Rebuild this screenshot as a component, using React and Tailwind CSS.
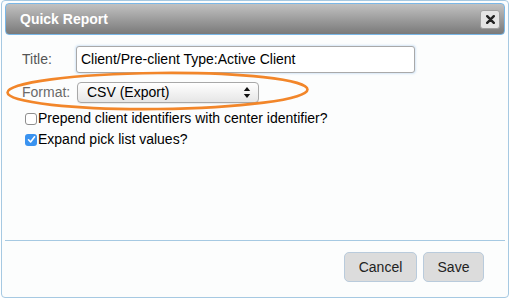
import React from "react";

export default function App() {
  return (
    <div className="relative w-[510px] h-[300px] bg-white" style={{ fontFamily: '"Liberation Sans", Arial, sans-serif' }}>
      <div className="ml-[1px] w-[508px] h-[298px] border border-[#a6c9e2] rounded-[4px] bg-[#fcfdfd] pt-[2px] px-[3px] pb-[3px] flex flex-col">
        {/* Title bar */}
        <div className="h-[32px] shrink-0 rounded-[4px] border border-[#79b7e7] bg-gradient-to-b from-[#c2c2c2] to-[#7a7a7a] flex items-center justify-between pl-[14px] pr-[4px]">
          <span className="text-[14px] font-bold text-white">Quick Report</span>
          <button className="w-[20px] h-[19px] rounded-[3px] border border-[#a0a0a0] bg-[#e4e4e4] flex items-center justify-center">
            <svg width="9" height="9" viewBox="0 0 9 9">
              <path d="M1.2 1.2 L7.8 7.8 M7.8 1.2 L1.2 7.8" stroke="#222" strokeWidth="2.4" strokeLinecap="round" />
            </svg>
          </button>
        </div>

        {/* Content */}
        <div className="h-[205px] shrink-0 pl-[17px] pt-[11px]">
          <div className="flex items-center h-[27px]">
            <span className="w-[54px] text-[14px] text-[#555]">Title:</span>
            <div className="w-[339px] h-[27px] border border-[#a9a9a9] rounded-[3px] bg-white flex items-center pl-[4px] shadow-[0_0_2px_1px_rgba(140,190,235,0.35)]">
              <span className="text-[14px] text-black">Client/Pre-client Type:Active Client</span>
            </div>
          </div>
          <div className="flex items-center h-[21px] mt-[9px]">
            <span className="w-[55px] text-[14px] text-[#6a6a6a]">Format:</span>
            <div className="w-[182px] h-[21px] border border-[#a8a8a8] rounded-[4px] bg-gradient-to-b from-[#ffffff] to-[#e6e6e6] flex items-center justify-between pl-[9px] pr-[7px] shadow-[0_1px_1px_rgba(0,0,0,0.08)]">
              <span className="text-[14px] text-black">CSV (Export)</span>
              <svg width="8" height="13" viewBox="0 0 8 13">
                <path d="M4 1 L7.2 5 L0.8 5 Z" fill="#111" />
                <path d="M4 12 L7.2 8 L0.8 8 Z" fill="#111" />
              </svg>
            </div>
          </div>
          <div className="flex items-center h-[17px] mt-[7px] pl-[3px]">
            <span className="w-[12px] h-[12px] rounded-[3px] border border-[#8e8e8e] bg-white shrink-0" />
            <span className="ml-[1px] text-[14px] text-black">Prepend client identifiers with center identifier?</span>
          </div>
          <div className="flex items-center h-[17px] mt-[4px] pl-[3px]">
            <span className="w-[12px] h-[12px] rounded-[3px] bg-[#3a93f0] shrink-0 flex items-center justify-center">
              <svg width="9" height="9" viewBox="0 0 9 9">
                <path d="M1.5 4.8 L3.6 7 L7.6 1.8" stroke="white" strokeWidth="1.6" fill="none" strokeLinecap="round" strokeLinejoin="round" />
              </svg>
            </span>
            <span className="ml-[1px] text-[14px] text-black">Expand pick list values?</span>
          </div>
        </div>

        {/* Button pane */}
        <div className="flex-1 border-t border-[#a6c9e2] flex justify-end items-start pt-[11px] pr-[21px] gap-[6px]">
          <button className="w-[73px] h-[30px] rounded-[5px] border border-[#b9cbdc] bg-[#dcdcdc] text-[14px] text-[#222]">Cancel</button>
          <button className="w-[61px] h-[30px] rounded-[5px] border border-[#b9cbdc] bg-[#dcdcdc] text-[14px] text-[#222]">Save</button>
        </div>
      </div>

      {/* Annotation ellipse */}
      <svg className="absolute left-0 top-0 pointer-events-none" width="510" height="300">
        <ellipse cx="157.5" cy="91" rx="150" ry="18" fill="none" stroke="#f2862a" strokeWidth="2.6" transform="rotate(-0.6 157.5 91)" />
      </svg>
    </div>
  );
}
